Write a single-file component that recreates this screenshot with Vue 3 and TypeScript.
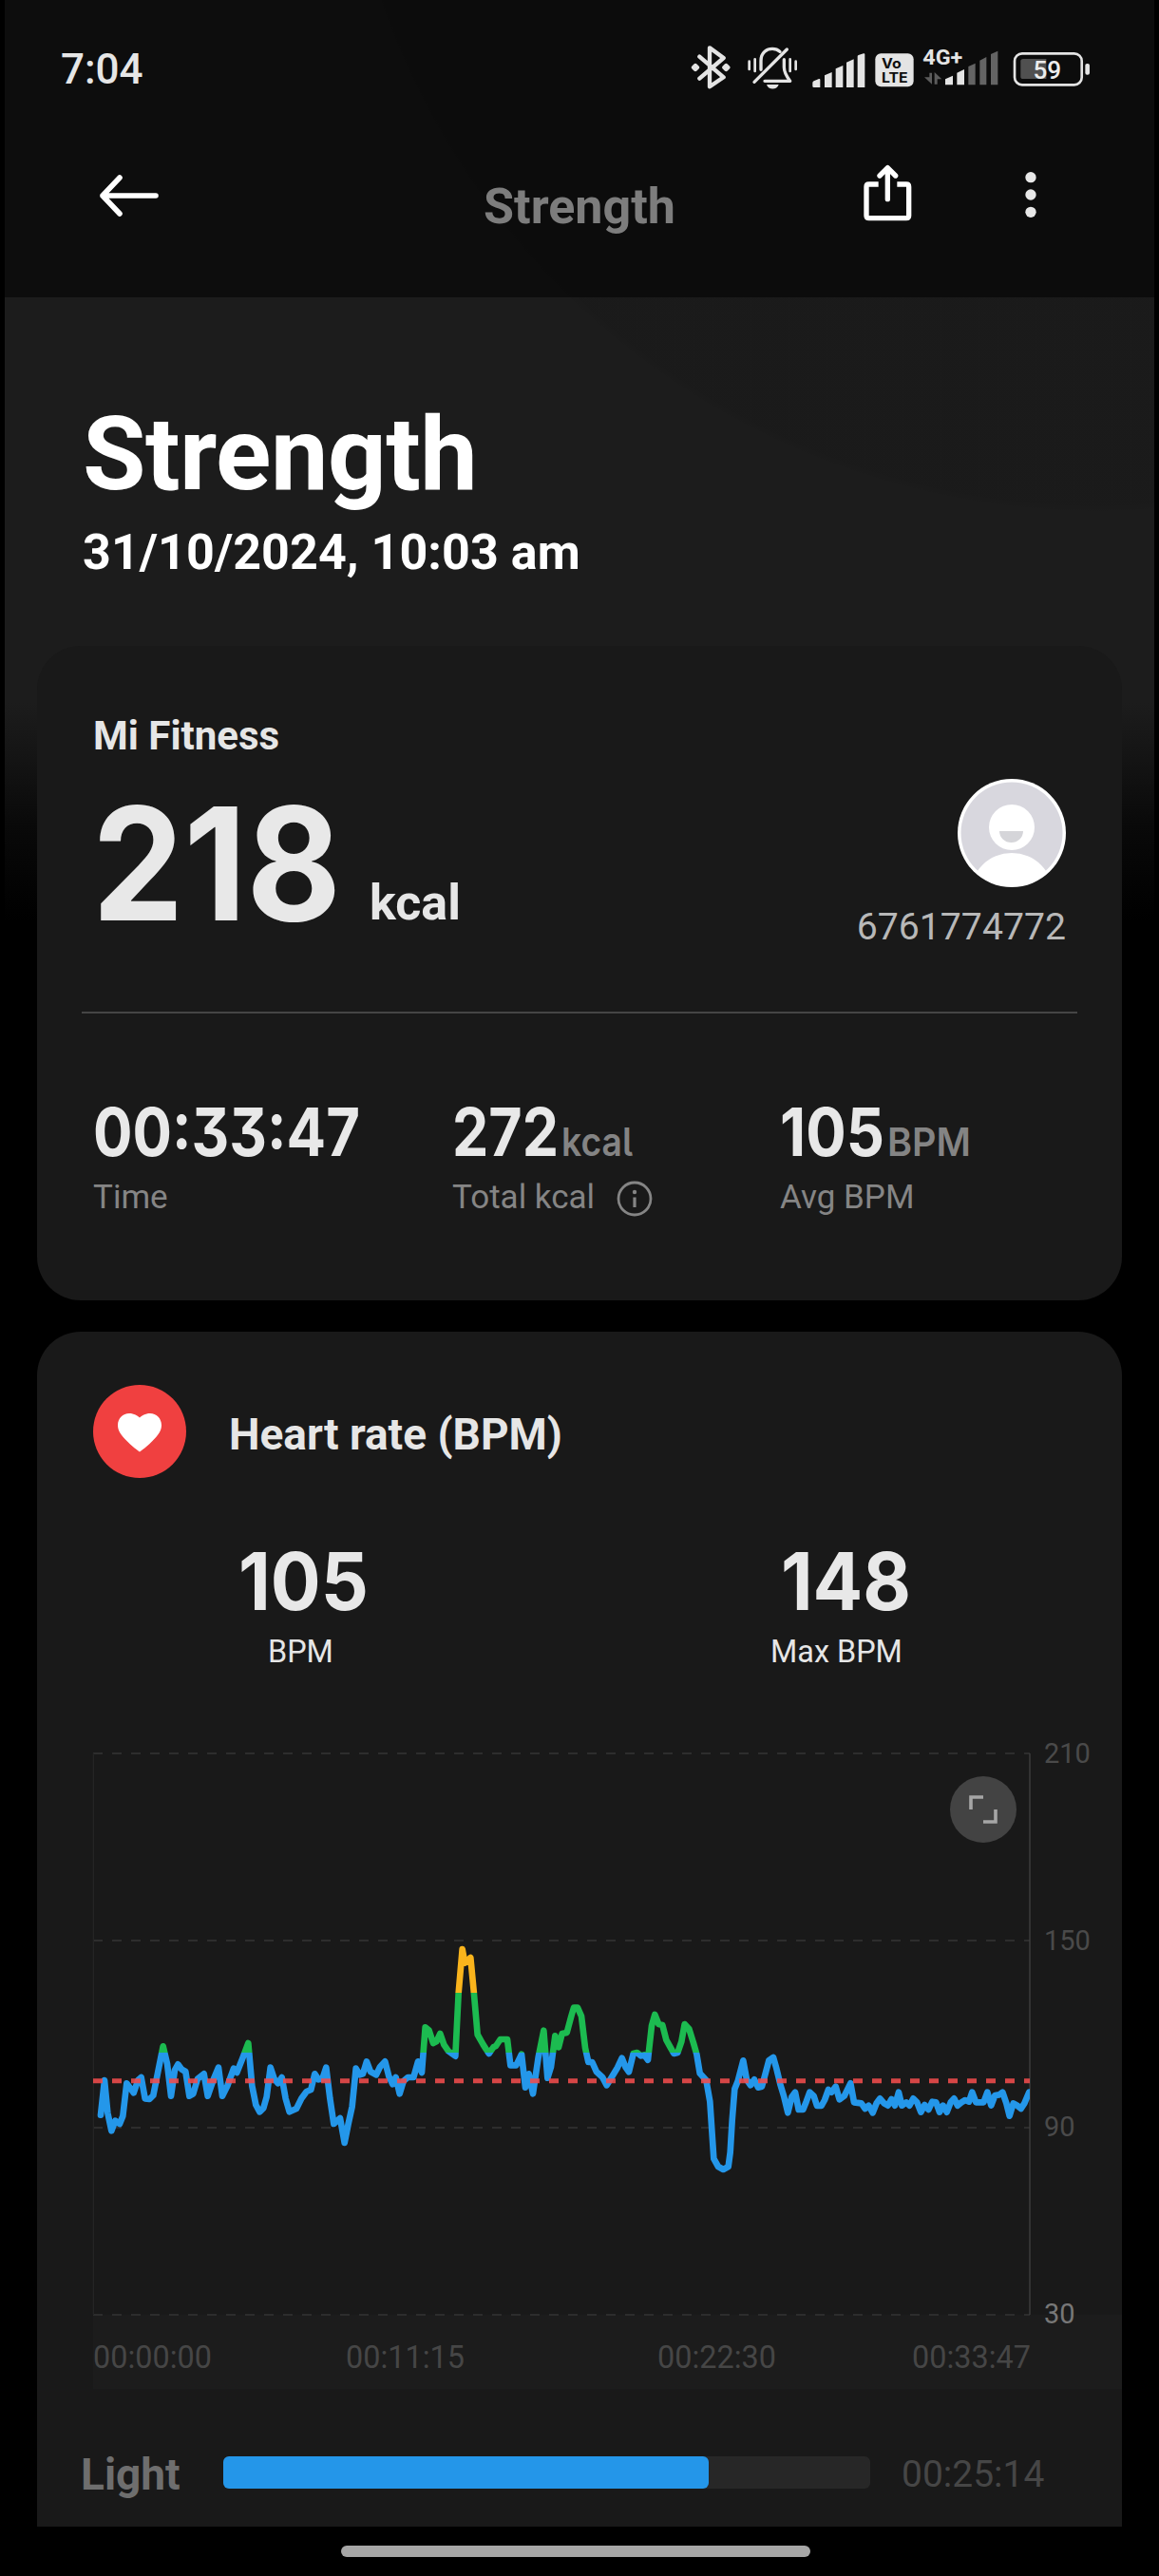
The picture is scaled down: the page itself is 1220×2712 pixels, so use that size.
<script setup lang="ts">
interface Stat {
  value: string
  width: number
  unit?: string
  unitWidth?: number
  label: string
  info?: boolean
}

const stats: Stat[] = [
  { value: '00:33:47', width: 281, label: 'Time' },
  { value: '272', width: 112, unit: 'kcal', unitWidth: 75, label: 'Total kcal', info: true },
  { value: '105', width: 110, unit: 'BPM', unitWidth: 88, label: 'Avg BPM' },
]

const levels: string[] = ['210', '150', '90', '30']
const times: string[] = ['00:00:00', '00:11:15', '00:22:30', '00:33:47']

// Heart rate trace; the plot area is 2958 x 1773 units, 9.85 units per BPM.
const trace = `24,1142 36,1032 46,1135 58,1192 70,1160 84,1170 94,1145 106,1042 116,1055 128,1072 142,1032 152,1023
164,1090 178,1092 190,1080 204,1010 221,925 234,980 246,1082 258,1000 268,982 280,998 292,1005 304,1082 316,1075
330,1028 350,1012 362,1082 380,1030 396,992 408,1082 424,1050 444,995 454,1008 471,965 490,915 502,1050 514,1110
526,1132 538,1120 548,1085 560,992 572,1028 584,1042 596,1023 608,1090 620,1132 642,1122 658,1090 674,1068 688,1062
700,1012 712,1030 724,1028 736,992 748,1090 760,1170 780,1152 794,1230 806,1170 818,1115 830,995 842,1015 852,1012
864,973 876,1005 894,1015 906,990 922,973 934,1020 946,1045 956,1023 968,1075 980,1035 994,1023 1012,1023 1026,973
1038,1008 1049,865 1061,875 1074,915 1084,910 1096,885 1108,920 1122,940 1144,956 1154,757 1166,618 1174,662
1192,645 1202,750 1214,888 1232,920 1250,948 1264,928 1272,924 1286,903 1308,903 1318,985 1336,985 1353,950
1365,1055 1376,1012 1389,1075 1406,960 1423,875 1435,1025 1446,990 1459,892 1470,928 1481,885 1496,882 1510,830
1518,803 1530,803 1542,830 1554,930 1564,975 1576,975 1590,1006 1608,1022 1622,1048 1636,1025 1656,992 1670,962
1682,992 1692,1006 1706,948 1718,945 1730,955 1740,952 1752,968 1764,860 1774,825 1786,855 1798,858 1810,905
1824,930 1834,948 1846,945 1858,910 1868,855 1882,870 1896,915 1906,950 1916,1010 1936,1032 1948,1100 1960,1280
1974,1305 1990,1314 2006,1305 2012,1260 2018,1160 2026,1060 2036,1035 2053,970 2064,1030 2076,1048 2088,1030 2100,1055
2112,1052 2122,1015 2134,970 2148,960 2158,995 2170,1045 2182,1085 2194,1135 2206,1085 2217,1070 2228,1125 2242,1125
2252,1100 2263,1070 2276,1082 2286,1113 2300,1113 2310,1095 2322,1062 2332,1070 2345,1052 2357,1093 2372,1082
2392,1042 2403,1102 2426,1105 2438,1122 2449,1112 2462,1135 2474,1105 2485,1090 2498,1105 2510,1112 2521,1092
2532,1112 2544,1070 2554,1112 2568,1102 2578,1112 2590,1090 2602,1102 2614,1133 2626,1110 2638,1125 2650,1100
2662,1102 2673,1133 2684,1112 2696,1133 2708,1102 2719,1090 2730,1112 2742,1102 2754,1095 2766,1100 2776,1070
2788,1102 2812,1102 2824,1070 2836,1112 2848,1080 2861,1078 2872,1070 2884,1105 2894,1145 2906,1105 2918,1112
2930,1122 2941,1105 2956,1070`
</script>

<template>
  <div class="screen">
    <header class="top">
      <div class="statusbar">
        <span class="clock">7:04</span>
        <div class="status-icons">
          <svg width="43" height="46" viewBox="82 84 129 138" fill="none" stroke="#e4e4e4" stroke-width="13" stroke-linecap="round" stroke-linejoin="round">
            <path d="M110 119 186 184 142 214V91L186 123 110 188" />
            <path d="M97 147l6 6-6 6-6-6zM194 147l6 6-6 6-6-6z" fill="#e4e4e4" />
          </svg>
          <svg class="bell" width="53" height="46" viewBox="260 84 159 138" fill="none" stroke="#e4e4e4" stroke-width="9" stroke-linecap="round">
            <path d="M265 134V159M283 127V165M394 127V165M412 134V159" stroke-width="8" />
            <path d="M302 160V132C302 104 322 94 338 94 348 94 356 97 362 103M375 128V152C375 170 384 182 394 196H314" stroke-width="10" stroke-linejoin="round" />
            <path d="M281 199 384 96" stroke-width="10" />
            <path d="M320 207H358C353 225 325 225 320 207Z" fill="#e4e4e4" stroke="none" />
          </svg>
          <svg class="signal" width="56" height="36" viewBox="466 100 168 108" fill="#e4e4e4">
            <path d="M467 204V194Q467 190 471 188L487 181Q491 180 491 184V208H471Q467 208 467 204ZM505 208V170L528 160V208ZM540 208V149L563 139V208ZM574 208V129L597 119V208ZM609 208V110Q609 107 612 106L628 101Q632 100 632 104V208Z" />
          </svg>
          <svg class="volte" width="41" height="36" viewBox="663 101 123 108">
            <rect x="664" y="102" width="121" height="105" rx="18" fill="#e4e4e4" />
            <text x="684" y="150" font-size="43" textLength="62" lengthAdjust="spacingAndGlyphs">Vo</text>
            <text x="684" y="194" font-size="42" textLength="83" lengthAdjust="spacingAndGlyphs">LTE</text>
          </svg>
          <svg class="mobile" width="80" height="46" viewBox="812 84 240 138" fill="#e4e4e4">
            <text x="813" y="143" font-size="64" textLength="126" lengthAdjust="spacingAndGlyphs">4G+</text>
            <path d="M834 170H842V206L818 184H834ZM850 206V168L873 190H859V206Z" fill="#5c5c5c" />
            <path d="M884 208V190L908 179V208ZM921 208V170L944 159V208Z" />
            <path d="M957 208V150L979 140V208ZM993 208V131L1014 120V208ZM1028 208V111L1050 101V208Z" fill="#646464" />
          </svg>
          <svg class="battery" width="82" height="36" viewBox="1098 99 246 109">
            <rect x="1103" y="103" width="214" height="100" rx="24" fill="none" stroke="#e4e4e4" stroke-width="8" />
            <path d="M1130 120H1204V184H1130Q1122 184 1122 176V128Q1122 120 1130 120Z" fill="#505050" />
            <rect x="1328" y="135" width="14" height="36" rx="6" fill="#e4e4e4" />
            <text x="1162" y="183" font-size="80" textLength="90" lengthAdjust="spacingAndGlyphs">59</text>
          </svg>
        </div>
      </div>
      <nav class="appbar">
        <svg class="back" width="64" height="46" viewBox="0 0 64 46" fill="none" stroke="#fff" stroke-width="5.6" stroke-linecap="round" stroke-linejoin="round">
          <path d="M60 23H4M22 4 4 23 22 42" />
        </svg>
        <span class="bar-title">Strength</span>
        <svg class="share" width="51" height="60" viewBox="629 458 153 180" fill="none" stroke="#fff" stroke-width="16">
          <path d="M676 521H646Q638 521 638 529V620Q638 628 646 628H764Q772 628 772 620V529Q772 521 764 521H735" />
          <path d="M705 568V470M680 494 705 469 730 494" stroke-linecap="round" stroke-linejoin="round" />
        </svg>
        <svg class="more" width="12" height="50" viewBox="0 0 36 150" fill="#e8e8e8">
          <circle cx="18" cy="20" r="17" /><circle cx="18" cy="75" r="17" /><circle cx="18" cy="130" r="17" />
        </svg>
      </nav>
    </header>

    <section class="hero">
      <h1>Strength</h1>
      <p>31/10/2024, 10:03 am</p>
    </section>

    <section class="card summary">
      <h2>Mi Fitness</h2>
      <div class="summary-main">
        <div class="energy">
          <svg class="num" width="262" height="120"><text y="120" font-size="165" textLength="262" lengthAdjust="spacingAndGlyphs">218</text></svg>
          <span>kcal</span>
        </div>
        <div class="user">
          <svg width="114" height="114" viewBox="0 0 114 114">
            <defs><clipPath id="face"><circle cx="57" cy="57" r="56" /></clipPath></defs>
            <circle cx="57" cy="57" r="57" fill="#fff" />
            <circle cx="57" cy="57" r="53.5" fill="#d8d7de" />
            <circle cx="57" cy="51" r="24" fill="#fff" />
            <path d="M44 55H69A12.5 12 0 0 1 44 55Z" fill="#d5d5d9" />
            <circle cx="57" cy="122" r="44" fill="#fff" clip-path="url(#face)" />
          </svg>
          <span>6761774772</span>
        </div>
      </div>
      <hr />
      <div class="stats">
        <div v-for="s in stats" :key="s.label" class="stat">
          <div class="stat-value">
            <svg class="num" :width="s.width" height="51"><text y="50.5" font-size="70" :textLength="s.width" lengthAdjust="spacingAndGlyphs">{{ s.value }}</text></svg>
            <svg v-if="s.unit" class="num unit" :width="s.unitWidth" height="51"><text y="50.5" font-size="41" :textLength="s.unitWidth" lengthAdjust="spacingAndGlyphs">{{ s.unit }}</text></svg>
          </div>
          <div class="stat-label">
            <span>{{ s.label }}</span>
            <svg v-if="s.info" width="38" height="38" viewBox="0 0 38 38" fill="none" stroke="#858585" stroke-width="2.8">
              <circle cx="19" cy="19" r="17" />
              <path d="M19 17.5V28" stroke-width="3.2" />
              <circle cx="19" cy="12" r="2.2" fill="#858585" stroke="none" />
            </svg>
          </div>
        </div>
      </div>
    </section>

    <section class="card heart">
      <div class="heart-head">
        <svg width="98" height="98" viewBox="0 0 98 98">
          <circle cx="49" cy="49" r="49" fill="#f04040" />
          <path d="M49 70.5C47 69 42 65.500 36 59.500 29 52.500 26 48 26 42.500 26 35 31.500 30 38 30 43 30 47 32.500 49 34.500 51 32.500 55 30 60 30 66.500 30 72 35 72 42.500 72 48 69 52.500 62 59.500 56 65.500 51 69 49 70.500Z" fill="#fff" />
        </svg>
        <h2>Heart rate (BPM)</h2>
      </div>
      <div class="rates">
        <div class="rate avg">
          <svg class="num" width="137" height="61"><text y="61" font-size="84" textLength="137" lengthAdjust="spacingAndGlyphs">105</text></svg>
          <span>BPM</span>
        </div>
        <div class="rate max">
          <svg class="num" width="137" height="61"><text y="61" font-size="84" textLength="137" lengthAdjust="spacingAndGlyphs">148</text></svg>
          <span>Max BPM</span>
        </div>
      </div>
      <div class="chart">
        <div class="plot">
          <svg class="plot-svg" width="986" height="591" viewBox="0 0 2958 1773" fill="none">
            <defs>
              <linearGradient id="zones" gradientUnits="userSpaceOnUse" x1="0" y1="0" x2="0" y2="1773">
                <stop offset=".427" stop-color="#fab41c" /><stop offset=".427" stop-color="#1cbb50" />
                <stop offset=".533" stop-color="#1cbb50" /><stop offset=".533" stop-color="#2497ea" />
              </linearGradient>
              <clipPath id="plot-clip"><rect x="0" y="0" width="2958" height="1773" /></clipPath>
            </defs>
            <g stroke="#2d2d2d" stroke-width="6" stroke-dasharray="30 30">
              <path d="M0 0H2958M0 591H2958M0 1182H2958M0 1773H2958" />
            </g>
            <path d="M1 0V1773" stroke="#242424" stroke-width="4" />
            <path d="M2958 0V1773" stroke="#404040" stroke-width="4" />
            <polyline :points="trace" stroke="url(#zones)" stroke-width="20" stroke-linecap="round" stroke-linejoin="round" clip-path="url(#plot-clip)" />
            <path d="M0 1034H2958" stroke="#f04c4c" stroke-opacity=".88" stroke-width="15" stroke-dasharray="30 30" />
          </svg>
          <button class="expand" type="button" aria-label="Expand">
            <svg width="70" height="70" viewBox="0 0 70 70" fill="none" stroke="#a6a6a6" stroke-width="3.600">
              <path d="M22 35V22H35M35 48H48V35" />
            </svg>
          </button>
        </div>
        <div class="levels"><span v-for="l in levels" :key="l" :class="{ base: l === '30' }">{{ l }}</span></div>
      </div>
      <div class="times"><span v-for="t in times" :key="t">{{ t }}</span></div>
      <div class="zone">
        <b>Light</b>
        <div class="track"><div class="fill"></div></div>
        <span>00:25:14</span>
      </div>
    </section>
    <footer class="home"><i></i></footer>
  </div>
</template>

<style>
body { margin: 0; background: #000; }
</style>

<style scoped>
* { box-sizing: border-box; }
.screen {
  width: 1220px; height: 2712px; overflow: hidden;
  display: flex; flex-direction: column;
  font-family: Roboto, sans-serif; color: #e6e6e6;
  background:
    radial-gradient(circle 800px at 1150px -260px, rgba(0, 0, 0, .06) 99%, transparent 100%) 5px 0 / 1210px 960px no-repeat,
    linear-gradient(#1c1c1c 0, #1c1c1c 740px, #141414 800px, #090909 870px, #040404 925px, #000 970px) 5px 0 / 1210px 970px no-repeat,
    #000;
}
h1, h2, p { margin: 0; }
.top { height: 313px; margin: 0 5px; flex: none; background: rgba(0, 0, 0, .52); }
.statusbar { height: 145px; padding: 0 67px 0 59px; display: flex; justify-content: space-between; align-items: center; }
.clock { font-size: 44px; font-weight: 500; line-height: 52px; color: #e6e6e6; }
.status-icons { display: flex; align-items: center; height: 46px; margin-top: -3px; }
.bell { margin-left: 17px; }
.signal { margin-left: 15px; margin-top: 5px; }
.volte { margin-left: 10px; margin-top: 5px; }
.volte text { font-family: Inter, sans-serif; font-weight: 700; fill: #0e0e0e; }
.mobile { margin-left: 9px; }
.mobile text { font-family: Roboto, sans-serif; font-weight: 700; }
.battery { margin-left: 15px; margin-top: 3px; }
.battery text { font-family: Roboto, sans-serif; font-weight: 500; fill: #ececec; }
.appbar { display: grid; grid-template-columns: 306px 400px 51px 1fr; height: 122px; align-items: center; padding-left: 99px; }
.back { margin-bottom: 1px; }
.bar-title { text-align: center; font-size: 52px; font-weight: 700; line-height: 60px; color: #7d7d7d; margin-top: 23px; }
.share { margin-left: 99px; margin-bottom: 7px; }
.more { margin-left: 218px; margin-bottom: 2px; }
.hero { height: 367px; padding: 105px 0 0 87px; flex: none; color: #fff; }
.hero h1 { font-size: 108px; line-height: 120px; font-weight: 700; letter-spacing: -.5px; }
.hero p { font-size: 52px; line-height: 60px; font-weight: 700; margin-top: 14px; letter-spacing: .05px; }
.card { width: 1142px; margin: 0 auto; background: #191919; flex: none; }
.summary { height: 689px; border-radius: 46px; padding: 70px 47px 0; }
.summary h2 { font-size: 42px; line-height: 50px; font-weight: 700; padding-left: 12px; }
.summary-main { display: flex; justify-content: space-between; height: 265px; padding: 0 12px 0 11px; }
.num { display: block; overflow: visible; flex: none; }
.num text { font-family: Inter, sans-serif; font-weight: 700; font-feature-settings: 'cv05', 'cv09'; fill: #e8e8e8; }
.energy { display: flex; align-items: flex-end; height: 169px; }
.energy span { font-size: 52px; font-weight: 700; line-height: 52px; margin: 0 0 -8px 30px; }
.user { display: flex; flex-direction: column; align-items: flex-end; padding-top: 20px; }
.user span { font-size: 39.2px; line-height: 46px; margin-top: 19px; color: #b8b8b8; }
hr { border: 0; height: 2px; margin: 0; background: #454545; }
.stats { display: grid; grid-template-columns: 378px 345px 1fr; padding: 99px 0 0 12px; }
.stat-value { display: flex; }
.num.unit { margin-left: 3px; }
.num.unit text { fill: #848484; font-weight: 600; }
.stat-label { display: flex; align-items: center; height: 42px; margin-top: 22px; font-size: 35px; color: #858585; }
.stat-label svg { margin-left: 23px; margin-top: 4px; }
.heart { height: 1258px; margin-top: 33px; border-radius: 46px 46px 0 0; padding: 56px 0 0 59px; }
.heart-head { display: flex; align-items: center; height: 98px; }
.heart-head h2 { font-size: 46px; line-height: 54px; font-weight: 700; margin: 6px 0 0 45px; }
.rates { display: grid; grid-template-columns: 572px 1fr; height: 290px; padding-top: 78px; }
.rate { display: flex; flex-direction: column; align-items: flex-start; }
.rate span { font-size: 32.4px; line-height: 40px; margin-top: 24px; }
.avg .num { margin-left: 153px; }
.avg span { margin-left: 184px; }
.max .num { margin-left: 152px; }
.max span { margin-left: 141px; }
.chart { display: flex; height: 591px; }
.plot { position: relative; width: 986px; }
.plot-svg { display: block; overflow: visible; }
.expand { position: absolute; top: 24px; right: 14px; width: 70px; height: 70px; padding: 0; border: 0; border-radius: 50%; background: #434343; }
.expand svg { display: block; }
.levels { display: flex; flex-direction: column; justify-content: space-between; margin: -18px 0 -17px 15px; font-size: 29px; line-height: 36px; color: #4a4a4a; }
.levels .base { color: #777; }
.times { display: flex; height: 78px; padding-top: 26px; background: #1c1c1c; color: #464646; font-size: 32.4px; line-height: 38px; }
.times span { flex: none; width: 127px; margin-right: 139px; }
.times span:nth-child(2) { margin-right: 201px; }
.times span:nth-child(3) { margin-right: 141px; }
.times span:last-child { margin-right: 0; }
.zone { display: flex; align-items: center; margin: 58px 0 0 -13px; height: 60px; }
.zone b { width: 150px; font-size: 46px; font-weight: 700; line-height: 54px; color: #6e6e6e; margin-top: 3px; }
.track { width: 681px; height: 34px; border-radius: 6px; background: #272727; }
.fill { width: 511px; height: 34px; border-radius: 6px; background: #2496e9; }
.zone span { margin: 3px 0 0 33px; font-size: 39px; line-height: 46px; color: #464646; }
.home { display: flex; justify-content: center; padding: 20px 8px 0 0; height: 52px; }
.home i { width: 494px; height: 12px; border-radius: 6px; background: #a6a6a6; }
</style>
